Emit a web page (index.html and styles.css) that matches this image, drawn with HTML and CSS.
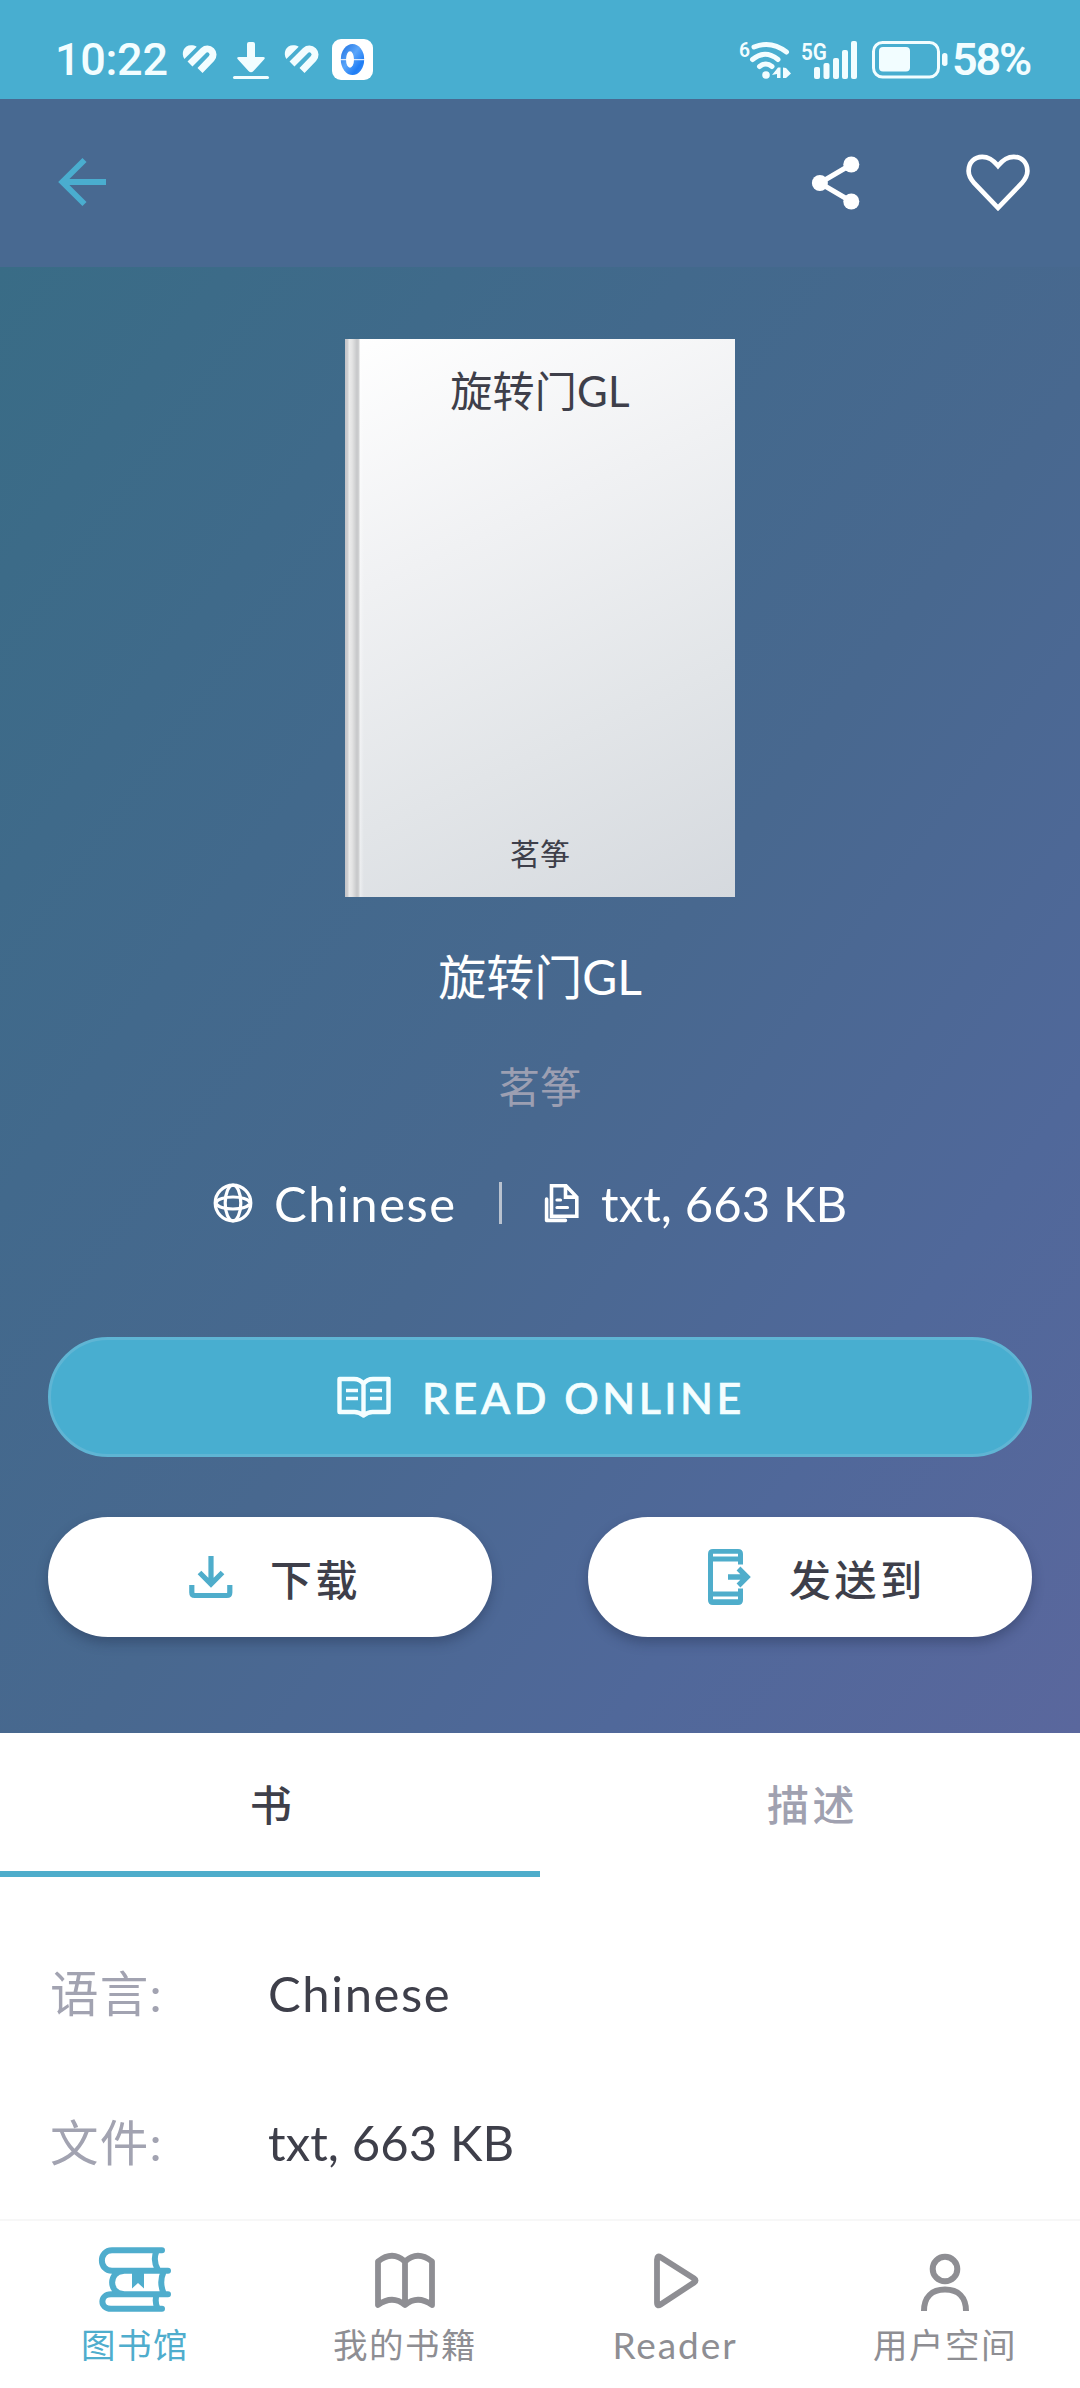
FILE: index.html
```html
<!DOCTYPE html>
<html lang="zh-CN">
<head>
<meta charset="utf-8">
<title>旋转门GL</title>
<link rel="stylesheet" href="styles.css">
</head>
<body>
<div class="screen">
  <header class="status">
    <div class="status-left">
      <span class="clock">10:22</span>
      <svg class="i-pulse" viewBox="0 0 36 31" width="36" height="31"><path d="M2.400 15C-1.500 9 2 1.300 9 1.300c2.300 0 4 .4 5.700 1.500z" fill="#f2fdff"/><path d="M8 20 21.500 6.500a5.660 5.660 0 0 1 8 8L18 26.500" fill="none" stroke="#f2fdff" stroke-width="7"/></svg>
      <svg class="i-down" viewBox="0 0 36 38" width="36" height="38"><path d="M14 3q0-2 2-2h4q2 0 2 2v13h8q3 0 1 2.500L20.500 30q-2.500 2.500-5 0L5 18.500Q3 16 6 16h8z" fill="#f2fdff"/><path d="M1.500 36.500h33" stroke="#f2fdff" stroke-width="3" stroke-linecap="round"/></svg>
      <svg class="i-pulse" viewBox="0 0 36 31" width="36" height="31"><path d="M2.400 15C-1.500 9 2 1.300 9 1.300c2.300 0 4 .4 5.700 1.500z" fill="#f2fdff"/><path d="M8 20 21.500 6.500a5.660 5.660 0 0 1 8 8L18 26.500" fill="none" stroke="#f2fdff" stroke-width="7"/></svg>
      <svg class="i-app" viewBox="0 0 41 41" width="41" height="41">
        <defs><linearGradient id="lens" x1="0" y1="0" x2="1" y2="1"><stop offset="0" stop-color="#1d6fe0"/><stop offset=".45" stop-color="#5ba6fa"/><stop offset=".75" stop-color="#1f7df5"/><stop offset="1" stop-color="#3c8ff8"/></linearGradient></defs>
        <rect width="41" height="41" rx="9" fill="#fff"/><ellipse cx="20.500" cy="20.500" rx="11.700" ry="15.500" fill="url(#lens)"/><ellipse cx="18" cy="20.500" rx="4" ry="8.300" fill="#fff"/><path d="M8 20.700h25" stroke="#fff" stroke-width="1"/></svg>
    </div>
    <div class="status-right">
      <svg class="i-wifi" viewBox="0 0 52 41" width="52" height="41"><text class="t-six" x="0" y="17.500" textLength="11" lengthAdjust="spacingAndGlyphs">6</text><g fill="none" stroke="#f2fdff" stroke-width="5" stroke-linecap="round"><path d="M15 8Q32 1 47.500 13"/><path d="M13.500 20.500Q26 10 39 20.500"/><path d="M20.500 27.500Q27 22.500 33 27.500"/></g><circle cx="27" cy="36" r="3.800" fill="#f2fdff"/><path d="M33 36l6-7.500h2.500V39H38v-4zM44 28.500l3 .5 5 5.500-5 4.500h-3z" fill="#f2fdff"/></svg>
      <svg class="i-signal" viewBox="0 0 58 38" width="58" height="38"><text class="t-5g" x="0" y="18.500" textLength="26" lengthAdjust="spacingAndGlyphs">5G</text><g fill="#f2fdff"><rect x="13" y="26" width="6" height="12" rx="2"/><rect x="22.500" y="22" width="6" height="16" rx="2"/><rect x="32" y="17" width="6" height="21" rx="2"/><rect x="41" y="9" width="6" height="29" rx="2"/><rect x="50" y="0" width="6" height="38" rx="2"/></g></svg>
      <svg class="i-battery" viewBox="0 0 76 38" width="76" height="38"><rect x="1.500" y="1.500" width="65" height="34.500" rx="9" fill="none" stroke="#f2fdff" stroke-width="3"/><rect x="7" y="6" width="31" height="24.500" rx="4" fill="#f2fdff"/><rect x="70" y="12" width="5.500" height="13" rx="2.700" fill="#f2fdff"/></svg>
      <span class="percent">58%</span>
    </div>
  </header>

  <nav class="appbar">
    <svg class="i-back" viewBox="0 0 48 48" width="48" height="48"><path d="M26.500 2 4.300 24l22.200 22M4.300 24H48" fill="none" stroke="#4aadcf" stroke-width="5.800"/></svg>
    <div class="appbar-actions">
      <svg viewBox="0 0 48 54" width="48" height="54"><path d="M39.300 8.500 7.700 27l31.600 18.500" fill="none" stroke="#fff" stroke-width="5"/><circle cx="39.300" cy="8.500" r="8" fill="#fff"/><circle cx="7.900" cy="27" r="8" fill="#fff"/><circle cx="39.300" cy="45.500" r="8" fill="#fff"/></svg>
      <svg viewBox="0 0 64 58" width="64" height="58"><path d="M32 53.800 8.500 29.500C4.500 25 2.600 21.500 2.600 17c0-8.500 6-14.200 13.600-14.200 6.500 0 10.500 2.500 15.800 9 5.300-6.500 9.300-9 15.800-9 7.700 0 13.600 5.700 13.600 14.200 0 4.500-1.900 8-5.900 12.500z" fill="none" stroke="#fff" stroke-width="4.700"/></svg>
    </div>
  </nav>

  <main class="hero">
    <div class="cover">
      <span class="cover-title">旋转门GL</span>
      <span class="cover-author">茗筝</span>
    </div>
    <h1 class="title">旋转门GL</h1>
    <p class="author">茗筝</p>
    <div class="meta">
      <svg viewBox="0 0 40 40" width="40" height="40"><g fill="none" stroke="#fff" stroke-width="3.200"><circle cx="20" cy="20" r="17.800"/><ellipse cx="20" cy="20" rx="7.800" ry="17.800"/><path d="M3 20c2-8 32-8 34 0M3 20c2 8 32 8 34 0"/></g></svg>
      <span class="meta-lang">Chinese</span>
      <i class="divider"></i>
      <svg class="i-files" viewBox="0 0 36 40" width="36" height="40"><g fill="none" stroke="#fff" stroke-width="3.600"><path d="M7.500 2.800H22l10.800 11.300v19.200H7.500zM21.500 2.600v11.500H33"/><path d="M2.600 16v21.400h18.800" stroke-linecap="round" stroke-linejoin="round"/><path d="M13 17h3.500M13 24.500h10.500" stroke-width="3.200" stroke-linecap="round"/></g></svg>
      <span class="meta-file">txt, 663 KB</span>
    </div>
    <button class="btn btn-read">
      <svg viewBox="0 0 54 42" width="54" height="42"><path d="M2.500 3H17q6 0 9.500 5Q30 3 36 3h15.500v33H35.500q-4.500 0-9 3.500-4.500-3.500-9-3.500h-15zM26.500 8v30" fill="none" stroke="#f4feff" stroke-width="4.400" stroke-linejoin="round"/><path d="M9 14.500h12M9 22.500h12M33 14.500h12M33 22.500h12" stroke="#f4feff" stroke-width="3.600"/></svg>
      <span>READ ONLINE</span>
    </button>
    <div class="btn-row">
      <button class="btn btn-white btn-download">
        <svg viewBox="0 0 44 42" width="44" height="42"><path d="M22 0v27M10.500 16.500 22 28l11.500-11.500" fill="none" stroke="#4fadcb" stroke-width="5.200"/><path d="M2.800 29v7.500q0 3 3 3h32q3 0 3-3V29" fill="none" stroke="#4fadcb" stroke-width="5.200"/></svg>
        <span>下载</span>
      </button>
      <button class="btn btn-white btn-send">
        <svg viewBox="0 0 42 56" width="42" height="56"><path fill-rule="evenodd" d="M5 0h25q5 0 5 5v10.500h-5v-3H5v30h25v-3h5V51q0 5-5 5H5q-5 0-5-5V5Q0 0 5 0zM5 4.700v2.800h25V4.700zM5 47.500v2.800h25v-2.800z" fill="#4fadcb"/><path d="M20 28h18M30.500 19.500l8.500 8.500-8.500 8.500" fill="none" stroke="#4fadcb" stroke-width="5.400"/></svg>
        <span>发送到</span>
      </button>
    </div>
  </main>

  <section class="panel">
    <div class="tabs">
      <div class="tab active">书</div>
      <div class="tab">描述</div>
    </div>
    <dl class="details">
      <dt>语言:</dt><dd>Chinese</dd>
      <dt>文件:</dt><dd class="file">txt, 663 KB</dd>
    </dl>
  </section>

  <footer class="bottom">
    <a class="item on">
      <svg viewBox="0 0 72 66" width="72" height="66"><g fill="none" stroke="currentColor" stroke-width="6" stroke-linecap="round" stroke-linejoin="round"><path d="M63 3.300H13C-.5 3.300-.5 23.800 13 23.800h56M57.500 4q-4 9.500 1.500 19M69 47.300H12c-11.500 0-11.500 14.500 0 14.500h51M57.500 48q-2 7 1 13M24 24c-14.500 1-14.500 22 0 23M64.500 25q-4.500 10 0 21"/></g><path d="M33 24h12v17.500l-6-5.500-6 5.500z" fill="currentColor"/></svg>
      <span>图书馆</span>
    </a>
    <a class="item">
      <svg viewBox="0 0 60 66" width="60" height="66"><path d="M3 14.500Q17.500 3 30 14.500 42.500 3 57 14.500V58Q42.500 47.500 30 58 17.500 47.500 3 58zM30 15v42" fill="none" stroke="currentColor" stroke-width="5.800" stroke-linejoin="round"/></svg>
      <span>我的书籍</span>
    </a>
    <a class="item">
      <svg viewBox="0 0 60 66" width="60" height="66"><path d="M12 12.500q0-4.500 3.600-2.200l33.500 21.200q3 2 0 4L15.600 57.500Q12 60 12 55.500z" fill="none" stroke="currentColor" stroke-width="5.800" stroke-linejoin="round"/></svg>
      <span class="latin">Reader</span>
    </a>
    <a class="item">
      <svg viewBox="0 0 60 66" width="60" height="66"><g fill="none" stroke="currentColor" stroke-width="6"><circle cx="30" cy="22" r="12.300"/><path d="M9 64c0-14 8-21.500 21-21.500S51 50 51 64"/></g></svg>
      <span>用户空间</span>
    </a>
  </footer>
</div>
</body>
</html>
```
FILE: styles.css
```css
* { box-sizing: border-box; margin: 0; padding: 0; }
body {
  width: 1080px;
  background: #fff;
  font-family: Lato, "Noto Sans CJK SC", sans-serif;
  color: #3e3f4a;
}
svg { display: block; flex: none; overflow: visible; }
span { white-space: nowrap; }
.screen { display: flex; flex-direction: column; width: 1080px; height: 2388px; overflow: hidden; }

.status {
  height: 99px;
  padding: 20px 48px 0 55px;
  display: flex;
  align-items: center;
  justify-content: space-between;
  background: #48aed0;
  color: #f2fdff;
}
.status-left, .status-right { display: flex; align-items: center; }
.clock, .percent { padding-top: 1px; font: 500 45px/60px Roboto, sans-serif; }
.clock { width: 127px; letter-spacing: -.3px; }
.status-left .i-down { margin: 0 15px; }
.status-left .i-app { margin-left: 12px; }
.i-signal { margin-left: 10px; }
.i-battery { margin-left: 13px; }
.percent { width: 80px; margin-left: 4px; font-weight: 600; letter-spacing: -2.2px; }
.t-six { font: 600 21px Roboto, sans-serif; fill: #f2fdff; }
.t-5g { font: 600 24px Roboto, sans-serif; fill: #f2fdff; }

.appbar {
  height: 168px;
  padding: 0 50px 0 58px;
  display: flex;
  align-items: center;
  justify-content: space-between;
  background: #486991;
}
.i-back { margin-bottom: 2px; }
.appbar-actions { display: flex; align-items: center; gap: 106px; }

.hero {
  height: 1466px;
  padding: 72px 48px 0;
  display: flex;
  flex-direction: column;
  align-items: center;
  background: linear-gradient(to bottom right, #396c86 0%, #42698c 32%, #48688f 54%, #50689a 78%, #5a679d 100%);
}
.cover {
  width: 390px;
  height: 558px;
  padding: 22px 0 24px;
  display: flex;
  flex-direction: column;
  justify-content: space-between;
  align-items: center;
  background:
    linear-gradient(to right, #c4c4c8 0, #d0d0d2 3px, #ebebeb 4px, #e4e4e4 7px, #c6c7c9 12px, #d2d3d4 14px, rgba(255,255,255,.4) 15px, transparent 19px) left / 20px 100% no-repeat,
    linear-gradient(155deg, #fff 0%, #f0f1f3 35%, #e2e5e8 68%, #d5d9de 100%);
}
.cover-title { font-size: 42px; line-height: 60px; letter-spacing: .3px; }
.cover-author { font-size: 30px; line-height: 40px; }
.title { margin-top: 45px; font-size: 48px; line-height: 70px; font-weight: 400; color: #fff; }
.author { margin-top: 45px; font-size: 41.500px; line-height: 60px; color: #9c9fb2; }
.meta { height: 60px; margin-top: 56px; display: flex; align-items: center; align-self: flex-start; padding-left: 165px; color: #fff; font-size: 49px; line-height: 58px; }
.meta-lang { width: 183px; margin-left: 21px; letter-spacing: 1.500px; }
.divider { width: 3px; height: 42px; margin: 0 42px; background: #b9c2cf; }
.meta-file { margin-left: 21px; letter-spacing: .1px; }
.btn {
  height: 120px;
  border: 0;
  border-radius: 60px;
  display: flex;
  align-items: center;
  font-family: inherit;
  color: #3e3f4a;
}
.btn-read { width: 984px; margin-top: 104px; padding-left: 286px; border: 3px solid #5fb5d4; background: #48aed0; color: #f4feff; font-size: 43px; font-weight: 500; letter-spacing: 3.500px; -webkit-text-stroke: .7px #f4feff; }
.btn-read span { margin-left: 31px; }
.btn-row { width: 984px; margin-top: 60px; display: flex; justify-content: space-between; }
.btn-white { width: 444px; background: #fff; font-size: 42px; font-weight: 500; letter-spacing: 3.600px; box-shadow: 0 6px 12px rgba(30,40,70,.35); }
.btn-download { padding-left: 141px; }
.btn-download span { margin-left: 37px; }
.btn-send { padding-left: 120px; }
.btn-send span { margin-left: 39px; }

.panel { flex: 1; background: #fff; }
.tabs { display: flex; height: 144px; }
.tab { flex: 1; padding-left: 5px; border-bottom: 6px solid transparent; text-align: center; font-size: 42px; line-height: 144px; letter-spacing: 3.600px; font-weight: 500; color: #a0a1b0; }
.tab.active { border-color: #4eadcb; color: #3e3f4a; }
.details { display: grid; grid-template-columns: 218px 1fr; row-gap: 79px; padding: 81px 50px 0; font-size: 49px; line-height: 70px; }
.details dt { color: #a2a3b1; font-size: 48.500px; letter-spacing: 1.200px; }
.details dd { letter-spacing: 1.600px; }
.details .file { letter-spacing: .1px; }

.bottom { height: 169px; display: flex; background: #fff; border-top: 2px solid #f7f7f7; }
.item { flex: 1; display: flex; flex-direction: column; align-items: center; padding-top: 26px; color: #8e8e93; font-size: 34.500px; line-height: 50px; letter-spacing: 1.500px; }
.item span { margin-top: 7px; }
.item.on { color: #4fadcd; }
.item .latin { font-size: 37px; letter-spacing: 1.900px; }
```
